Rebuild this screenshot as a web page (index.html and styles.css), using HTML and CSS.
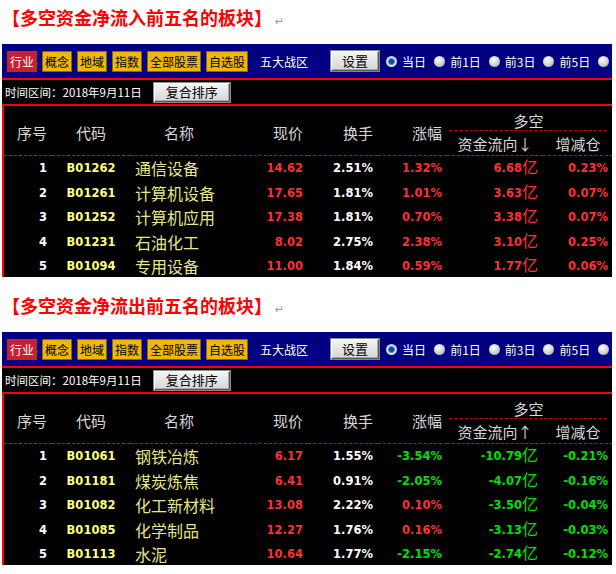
FILE: index.html
```html
<!DOCTYPE html>
<html lang="zh-CN">
<head>
    <meta charset="UTF-8">
    <title>多空资金流向</title>
    <link rel="stylesheet" href="styles.css">
</head>
<body>
    <div class="doc">
        <h2 class="title">【多空资金净流入前五名的板块】<span class="mark">↵</span></h2>
        <div class="shot" id="inflow"></div>

        <h2 class="title">【多空资金净流出前五名的板块】<span class="mark">↵</span></h2>
        <div class="shot" id="outflow"></div>
    </div>

    <script>
        // rows: 序号, 代码, 名称, 现价, 换手, 涨幅, 资金流向(亿), 增减仓
        const inflow = [
            ['1', 'B01262', '通信设备', '14.62', '2.51%', '1.32%', '6.68', '0.23%'],
            ['2', 'B01261', '计算机设备', '17.65', '1.81%', '1.01%', '3.63', '0.07%'],
            ['3', 'B01252', '计算机应用', '17.38', '1.81%', '0.70%', '3.38', '0.07%'],
            ['4', 'B01231', '石油化工', '8.02', '2.75%', '2.38%', '3.10', '0.25%'],
            ['5', 'B01094', '专用设备', '11.00', '1.84%', '0.59%', '1.77', '0.06%']
        ];

        const outflow = [
            ['1', 'B01061', '钢铁冶炼', '6.17', '1.55%', '-3.54%', '-10.79', '-0.21%'],
            ['2', 'B01181', '煤炭炼焦', '6.41', '0.91%', '-2.05%', '-4.07', '-0.16%'],
            ['3', 'B01082', '化工新材料', '13.08', '2.22%', '0.10%', '-3.50', '-0.04%'],
            ['4', 'B01085', '化学制品', '12.27', '1.76%', '0.16%', '-3.13', '-0.03%'],
            ['5', 'B01113', '水泥', '10.64', '1.77%', '-2.15%', '-2.74', '-0.12%']
        ];

        function tone(value) {
            return value.charAt(0) === '-' ? 'down' : 'up';
        }

        function toolbar() {
            const tabs = ['行业', '概念', '地域', '指数', '全部股票', '自选股']
                .map((t, i) => `<span class="tab${i === 0 ? ' active' : ''}">${t}</span>`)
                .join('');
            const days = ['当日', '前1日', '前3日', '前5日', '前10日']
                .map((d, i) => `<span class="radio${i === 0 ? ' on' : ''}"><i></i>${d}</span>`)
                .join('');
            return `
                <div class="toolbar">
                    ${tabs}
                    <span class="zone">五大战区</span>
                    <span class="btn btn-set">设置</span>
                    ${days}
                </div>
                <div class="timebar">
                    <span>时间区间：2018年9月11日</span>
                    <span class="btn btn-sort">复合排序</span>
                </div>`;
        }

        function renderPanel(id, rows, arrow) {
            let body = '';
            rows.forEach(r => {
                body += `
                    <tr>
                        <td class="idx">${r[0]}</td>
                        <td class="code">${r[1]}</td>
                        <td class="name">${r[2]}</td>
                        <td class="num up">${r[3]}</td>
                        <td class="num plain">${r[4]}</td>
                        <td class="num ${tone(r[5])}">${r[5]}</td>
                        <td class="num ${tone(r[6])}">${r[6]}<span class="unit">亿</span></td>
                        <td class="num ${tone(r[7])}">${r[7]}</td>
                    </tr>`;
            });

            document.getElementById(id).innerHTML = toolbar() + `
                <table class="grid">
                    <colgroup>
                        <col style="width:48px"><col style="width:78px"><col style="width:98px"><col style="width:80px">
                        <col style="width:70px"><col style="width:69px"><col style="width:96px"><col style="width:70px">
                    </colgroup>
                    <thead>
                        <tr>
                            <th rowspan="2" class="r">序号</th>
                            <th rowspan="2">代码</th>
                            <th rowspan="2">名称</th>
                            <th rowspan="2" class="r">现价</th>
                            <th rowspan="2" class="r">换手</th>
                            <th rowspan="2" class="r">涨幅</th>
                            <th colspan="2" class="group"><span>多空</span></th>
                        </tr>
                        <tr>
                            <th class="sub">资金流向${arrow}</th>
                            <th class="sub">增减仓</th>
                        </tr>
                    </thead>
                    <tbody>${body}</tbody>
                </table>`;
        }

        renderPanel('inflow', inflow, '↓');
        renderPanel('outflow', outflow, '↑');
    </script>
</body>
</html>
```

FILE: styles.css
```css
* {
    margin: 0;
    padding: 0;
    box-sizing: border-box;
}

body {
    background: #fff;
    font-family: "Noto Sans CJK SC", "DejaVu Sans", sans-serif;
}

.doc {
    padding-left: 2px;
}

/* Section titles */
.title {
    height: 34px;
    line-height: 34px;
    margin-bottom: 10px;
    font-size: 18px;
    font-weight: bold;
    color: #f00;
    white-space: nowrap;
}

.mark {
    margin-left: 3px;
    font-size: 11px;
    font-weight: normal;
    color: #999;
}

/* Screenshot frame */
.shot {
    width: 610px;
    height: 233px;
    margin-bottom: 11px;
    overflow: hidden;
    background: #000;
}

/* Blue toolbar */
.toolbar {
    display: flex;
    align-items: center;
    height: 36px;
    padding-left: 5px;
    background: #000080;
    border-bottom: 2px solid #f00;
    white-space: nowrap;
}

.toolbar > * {
    flex-shrink: 0;
}

.tab {
    height: 21px;
    margin-right: 5px;
    padding: 0 2px;
    line-height: 19px;
    font-size: 12px;
    color: #000;
    background: #f2b705;
    border: 1px solid #8a6a00;
}

.tab.active {
    color: #fff;
    background: #c8202e;
    border-color: #c8202e;
}

.zone {
    margin-left: 7px;
    font-size: 12px;
    color: #fff;
}

.btn {
    display: inline-block;
    height: 20px;
    line-height: 17px;
    font-size: 13px;
    color: #000;
    text-align: center;
    background: linear-gradient(#f4f4f4, #d6d6d6);
    border: 1px solid;
    border-color: #fff #555 #555 #fff;
    box-shadow: 0 0 0 1px #888, inset -1px -1px #a8a8a8;
}

.btn-set {
    width: 48px;
    margin: 0 7px 0 23px;
}

.radio {
    display: flex;
    align-items: center;
    margin-right: 8px;
    font-size: 12px;
    color: #fff;
}

.radio i {
    width: 11px;
    height: 11px;
    margin-right: 5px;
    border-radius: 50%;
    background: radial-gradient(circle at 40% 35%, #fff, #d0d0d0 55%, #8c8c8c);
}

.radio.on i {
    background: radial-gradient(circle, #0a4f9a 0 2px, #3f8fd0 3px, #e6e6e6 4px, #9a9a9a);
}

/* Date row */
.timebar {
    display: flex;
    align-items: center;
    height: 24px;
    padding-left: 3px;
    font-size: 11.5px;
    color: #fff;
}

.btn-sort {
    width: 76px;
    height: 19px;
    margin-left: 12px;
    line-height: 16px;
}

/* Data grid */
.grid {
    width: 611px;
    table-layout: fixed;
    border-collapse: separate;
    border-spacing: 0;
    border-top: 2px solid #f00;
    border-left: 2px solid #f00;
    color: #ddd;
}

.grid th {
    font-size: 15px;
    font-weight: normal;
    color: #d8d8d8;
    text-align: center;
    white-space: nowrap;
}

.grid th.r {
    text-align: right;
    padding-right: 5px;
}

.grid thead tr:first-child th {
    height: 25px;
}

.grid th[rowspan] {
    padding-top: 3px;
}

.grid th[rowspan],
.grid th.sub {
    border-bottom: 1px dashed #e00;
}

.grid th.sub {
    height: 24px;
    line-height: 22px;
    padding-top: 2px;
}

.grid th.group {
    padding: 0;
}

.grid th.group span {
    display: block;
    height: 25px;
    margin: 0 6px 0 3px;
    padding-top: 5px;
    line-height: 20px;
    border-bottom: 1px dashed #c00;
}

.grid td {
    height: 24.5px;
    white-space: nowrap;
    font-family: "DejaVu Sans", sans-serif;
    font-weight: bold;
    font-size: 11.5px;
}

.grid .idx {
    text-align: right;
    padding-right: 5px;
    color: #fff;
}

.grid .code {
    text-align: center;
    color: #ffff80;
}

.grid .name {
    padding-left: 5px;
    font-family: "Noto Sans CJK SC", sans-serif;
    font-weight: normal;
    font-size: 16px;
    color: #e6e68a;
}

.grid .num {
    text-align: right;
    padding-right: 5px;
}

.grid .plain {
    color: #fff;
}

.grid .up {
    color: #ff3030;
}

.grid .down {
    color: #00e000;
}

.unit {
    line-height: 0;
    vertical-align: -1px;
    font-family: "Noto Sans CJK SC", sans-serif;
    font-weight: normal;
    font-size: 16px;
}
```
